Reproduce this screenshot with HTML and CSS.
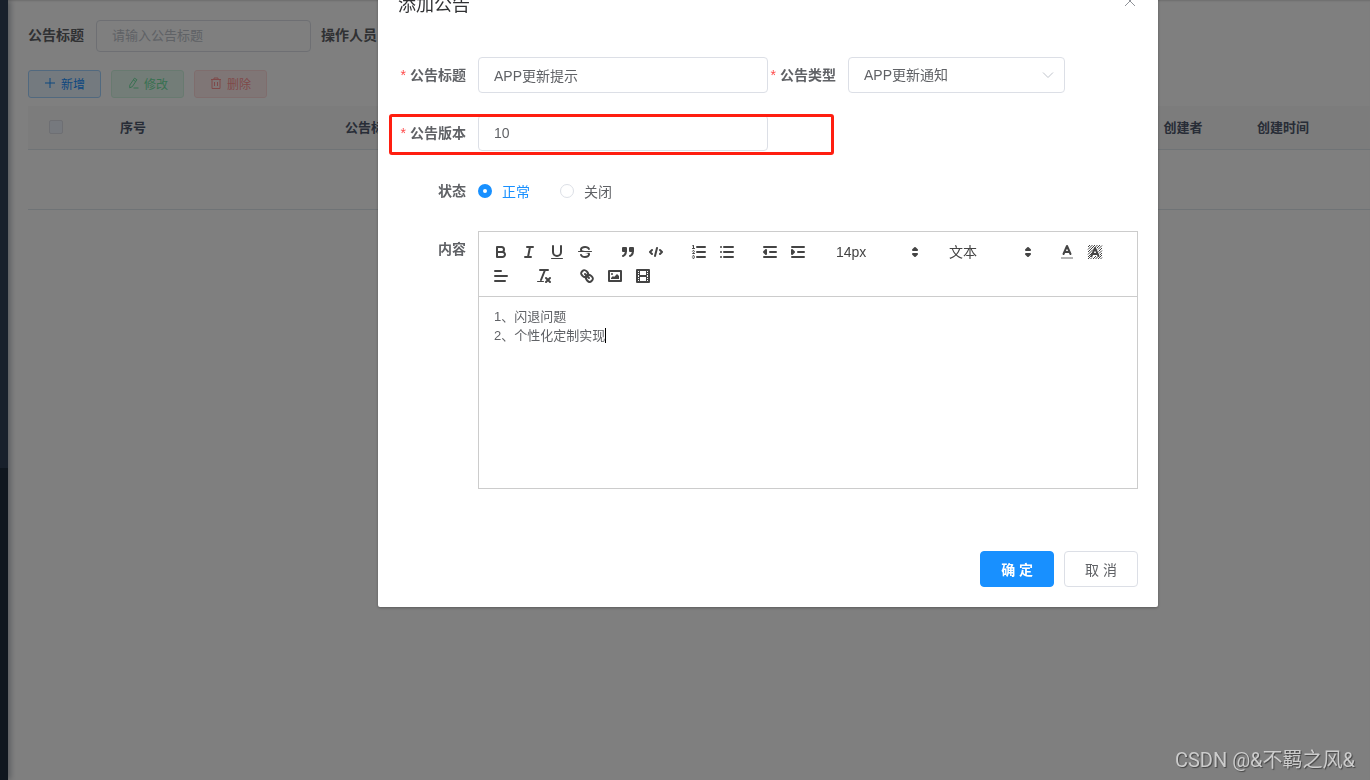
FILE: index.html
```html
<!DOCTYPE html>
<html lang="zh-CN">
<head>
<meta charset="utf-8">
<title>公告管理</title>
<link rel="stylesheet" href="styles.css">
</head>
<body>
<div class="app">
  <aside class="sidebar"><div class="sidebar-menu"></div></aside>
  <main class="main">
    <form class="search">
      <label class="search-label" for="q-title">公告标题</label>
      <input class="search-input" id="q-title" type="text" placeholder="请输入公告标题">
      <label class="search-label" for="q-user">操作人员</label>
      <input class="search-input" id="q-user" type="text">
    </form>
    <div class="actions">
      <button class="mini mini-primary" type="button"><svg viewBox="0 0 12 12"><path d="M6 1v10M1 6h10"/></svg>新增</button>
      <button class="mini mini-success" type="button" disabled><svg viewBox="0 0 12 12"><path d="M7.5 1.2l2.4 1.5-4.6 7-2.6 1.1.1-2.7zM6.3 3l2.4 1.5M6.500 11h5"/></svg>修改</button>
      <button class="mini mini-danger" type="button" disabled><svg viewBox="0 0 12 12"><path d="M1 2.500h10M4 2.500V1h4v1.500M2 2.500v9h8v-9M4.500 5v4M7.500 5v4"/></svg>删除</button>
    </div>
    <table class="table">
      <colgroup><col class="w-check"><col class="w-col"><col class="w-title"><col><col class="w-col"><col class="w-col"><col class="w-rest"></colgroup>
      <thead>
        <tr><th><input class="check" type="checkbox" aria-label="全选" disabled></th><th>序号</th><th>公告标题</th><th></th><th>创建者</th><th>创建时间</th><th></th></tr>
      </thead>
      <tbody><tr><td colspan="7"></td></tr></tbody>
    </table>
  </main>
</div>

<div class="overlay">
  <section class="dialog" role="dialog" aria-labelledby="dlg-title">
    <header class="dialog-header">
      <h1 class="dialog-title" id="dlg-title">添加公告</h1>
      <button class="close" type="button" aria-label="关闭"><svg viewBox="0 0 16 16"><path d="M3 3l10 10M13 3L3 13"/></svg></button>
    </header>
    <form class="dialog-body">
      <div class="row">
        <div class="field half">
          <label class="label required" for="f-title">公告标题</label>
          <input class="input" id="f-title" type="text" value="APP更新提示">
        </div>
        <div class="field half">
          <label class="label required" for="f-type">公告类型</label>
          <div class="select-wrap">
            <select class="input" id="f-type"><option>APP更新通知</option></select>
            <svg class="chevron" viewBox="0 0 14 14"><path d="M2 4.500l5 5 5-5"/></svg>
          </div>
        </div>
      </div>
      <div class="row marked">
        <div class="field half">
          <label class="label required" for="f-ver">公告版本</label>
          <input class="input" id="f-ver" type="text" value="10">
        </div>
      </div>
      <div class="field" role="radiogroup" aria-labelledby="f-state">
        <span class="label" id="f-state">状态</span>
        <label class="radio"><input type="radio" name="state" checked><span>正常</span></label>
        <label class="radio"><input type="radio" name="state"><span>关闭</span></label>
      </div>
      <div class="field top">
        <span class="label" id="f-content">内容</span>
        <div class="editor">
          <div class="toolbar">
            <span class="group">
              <button type="button" aria-label="加粗"><svg viewBox="0 0 18 18"><path class="s" d="M5,4H9.5A2.5,2.5,0,0,1,12,6.5v0A2.5,2.5,0,0,1,9.5,9H5V4Z"/><path class="s" d="M5,9h5.5A2.5,2.5,0,0,1,13,11.5v0A2.5,2.5,0,0,1,10.5,14H5V9Z"/></svg></button>
              <button type="button" aria-label="斜体"><svg viewBox="0 0 18 18"><path class="s" d="M7 4H13M5 14H11M8 14L10 4"/></svg></button>
              <button type="button" aria-label="下划线"><svg viewBox="0 0 18 18"><path class="s" d="M5,3V9a4.012,4.012,0,0,0,4,4H9a4.012,4.012,0,0,0,4-4V3"/><rect class="f" height="1" rx="0.5" width="12" x="3" y="15"/></svg></button>
              <button type="button" aria-label="删除线"><svg viewBox="0 0 18 18"><path class="s thin" d="M15.500 8.500H2.500"/><path class="f" d="M9.007,8C6.542,7.791,6,7.519,6,6.5,6,5.792,7.283,5,9,5c1.571,0,2.765.679,2.969,1.309a1,1,0,0,0,1.900-.617C13.356,4.106,11.354,3,9,3,6.200,3,4,4.538,4,6.500a3.200,3.200,0,0,0,.5,1.843Z"/><path class="f" d="M8.984,10C11.457,10.208,12,10.479,12,11.500c0,.708-1.283,1.500-3,1.500-1.571,0-2.765-.679-2.969-1.309a1,1,0,1,0-1.900.617C4.644,13.894,6.646,15,9,15c2.800,0,5-1.538,5-3.500a3.200,3.200,0,0,0-.5-1.843Z"/></svg></button>
            </span>
            <span class="group">
              <button type="button" aria-label="引用"><svg viewBox="0 0 18 18"><rect class="f s" height="3" width="3" x="4" y="5"/><rect class="f s" height="3" width="3" x="11" y="5"/><path class="f s" d="M7,8c0,4.031-3,5-3,5"/><path class="f s" d="M14,8c0,4.031-3,5-3,5"/></svg></button>
              <button type="button" aria-label="代码"><svg viewBox="0 0 18 18"><path class="s" d="M5 7L3 9 5 11M13 7L15 9 13 11M10 5L8 13"/></svg></button>
            </span>
            <span class="group">
              <button type="button" aria-label="有序列表"><svg viewBox="0 0 18 18"><path class="s" d="M7 4H15M7 9H15M7 14H15"/><path class="s thin" d="M2.500 5.500H4.500"/><path class="f" d="M3.500,6A0.500,0.500,0,0,1,3,5.500V3.085l-0.276.138A0.500,0.500,0,0,1,2.053,3c-0.124-.247-0.023-0.324.224-0.447l1-.5A0.500,0.500,0,0,1,4,2.500v3A0.500,0.500,0,0,1,3.500,6Z"/><path class="s thin" d="M4.500,10.500h-2c0-.234,1.850-1.076,1.850-2.234A0.959,0.959,0,0,0,2.500,8.156"/><path class="s thin" d="M2.500,14.846a0.959,0.959,0,0,0,1.850-.109A0.700,0.700,0,0,0,3.750,14a0.688,0.688,0,0,0,.6-0.736,0.959,0.959,0,0,0-1.850-.109"/></svg></button>
              <button type="button" aria-label="无序列表"><svg viewBox="0 0 18 18"><path class="s" d="M6 4H15M6 9H15M6 14H15M3 4H3M3 9H3M3 14H3"/></svg></button>
            </span>
            <span class="group">
              <button type="button" aria-label="减少缩进"><svg viewBox="0 0 18 18"><path class="s" d="M3 14H15M3 4H15M9 9H15"/><path class="f s" d="M5 7V11L3 9Z"/></svg></button>
              <button type="button" aria-label="增加缩进"><svg viewBox="0 0 18 18"><path class="s" d="M3 14H15M3 4H15M9 9H15"/><path class="f s" d="M3 7V11L5 9Z"/></svg></button>
            </span>
            <span class="group picker">
              <select aria-label="字号"><option>14px</option></select>
              <svg viewBox="0 0 18 18"><path class="f s" d="M7 11L9 13 11 11ZM7 7L9 5 11 7Z"/></svg>
            </span>
            <span class="group picker">
              <select aria-label="标题"><option>文本</option></select>
              <svg viewBox="0 0 18 18"><path class="f s" d="M7 11L9 13 11 11ZM7 7L9 5 11 7Z"/></svg>
            </span>
            <span class="group">
              <button type="button" aria-label="文字颜色"><svg viewBox="0 0 18 18"><path class="s faint" d="M3 15H15"/><path class="s" d="M5.500 11L9 3 12.500 11M11.630 9H6.380"/></svg></button>
              <button type="button" aria-label="背景颜色"><svg viewBox="0 0 18 18"><path class="hatch" d="M2 4L4 2M2 6.500L6.500 2M2 9L9 2M2 11.500L7 6.500M2 14L6 10M2 16L5 13M9 4.500L11.500 2M11 5L14 2M12 6.500L16 2.500M12.500 8.500L16 5M13 10.500L16 7.500M14 12L16 10M4.500 16L6 14.500M7 16L10 13M9.500 16L12 13.500M12 16L16 12M14.500 16L16 14.500"/><path class="s" d="M5.500 13L9 5 12.500 13M11.630 11H6.380"/></svg></button>
            </span>
            <span class="group">
              <button type="button" aria-label="对齐"><svg viewBox="0 0 18 18"><path class="s" d="M3 9H15M3 14H13M3 4H9"/></svg></button>
            </span>
            <span class="group">
              <button type="button" aria-label="清除格式"><svg viewBox="0 0 18 18"><path class="s" d="M5 3H13M6 13L10 3M11 11L15 15M15 11L11 15"/><rect class="f" height="1" rx="0.5" width="7" x="2" y="14"/></svg></button>
            </span>
            <span class="group">
              <button type="button" aria-label="链接"><svg viewBox="0 0 18 18"><path class="s" d="M7 7L11 11"/><path class="s" d="M8.900,4.577a3.476,3.476,0,0,1,.36,4.679A3.476,3.476,0,0,1,4.577,8.900C3.185,7.500,2.035,6.400,4.217,4.217S7.500,3.185,8.900,4.577Z"/><path class="s" d="M13.423,9.100a3.476,3.476,0,0,0-4.679-.36,3.476,3.476,0,0,0,.36,4.679c1.392,1.392,2.500,2.542,4.679.36S14.815,10.500,13.423,9.100Z"/></svg></button>
              <button type="button" aria-label="图片"><svg viewBox="0 0 18 18"><rect class="s" height="10" width="12" x="3" y="4"/><circle class="f" cx="6" cy="7" r="1"/><path class="f" d="M5 12V11L7 9 8 10 11 7 13 9V12Z"/></svg></button>
              <button type="button" aria-label="视频"><svg viewBox="0 0 18 18"><rect class="s" height="12" width="12" x="3" y="3"/><path class="f" d="M5 3h1v12H5zM12 3h1v12h-1zM5 8h8v2H5zM3 5h3v1H3zM3 7h3v1H3zM3 10h3v1H3zM3 12h3v1H3zM12 5h3v1h-3zM12 7h3v1h-3zM12 10h3v1h-3zM12 12h3v1h-3z"/></svg></button>
            </span>
          </div>
          <div class="content" contenteditable="true" role="textbox" aria-multiline="true" aria-labelledby="f-content"><p>1、闪退问题</p><p>2、个性化定制实现<span class="caret"></span></p></div>
        </div>
      </div>
    </form>
    <footer class="dialog-footer">
      <button class="btn btn-primary" type="button">确 定</button>
      <button class="btn" type="button">取 消</button>
    </footer>
  </section>
</div>
<div class="watermark">CSDN @&amp;不羁之风&amp;</div>
</body>
</html>
```
FILE: styles.css
```css
*, ::before, ::after { box-sizing: border-box; }

body {
  margin: 0;
  overflow: hidden;
  color: #606266;
  font: 14px "Liberation Sans", "Noto Sans CJK SC", sans-serif;
}

button, input, select { margin: 0; font: inherit; color: inherit; }
button { cursor: pointer; }
svg { fill: none; stroke: currentColor; flex: none; }

/* Page behind the dialog */
.app { display: flex; min-height: 100vh; }
.sidebar {
  width: 8px;
  flex: none;
  background: #1f2d3d;
  box-shadow: 2px 0 6px rgba(0, 21, 41, .35);
}
.sidebar-menu { height: 60vh; background: #304156; }
.main {
  flex: 1;
  min-width: 0;
  padding: 20px 0 0 20px;
  box-shadow: inset 0 2px 2px -1px rgba(0, 0, 0, .15);
}
.search { display: flex; align-items: center; height: 32px; }
.search-label { flex: none; padding-right: 12px; font-weight: bold; line-height: 30px; height: 32px; }
.search-input {
  flex: none;
  width: 215px;
  height: 32px;
  margin-right: 10px;
  padding: 0 15px 2px;
  border: 1px solid #dcdfe6;
  border-radius: 4px;
  font-size: 13px;
}
.search-input::placeholder { color: #c0c4cc; }
.actions { display: flex; gap: 10px; margin: 18px 0 8px; }
.mini {
  display: flex;
  align-items: center;
  gap: 5px;
  height: 28px;
  padding: 0 15px 2px;
  border: 1px solid;
  border-radius: 3px;
  font-size: 12px;
}
.mini svg { width: 12px; height: 12px; }
.mini-primary { color: #1890ff; background: #e8f4ff; border-color: #a3d3ff; }
.mini-success { color: #71e2a3; background: #e7faf0; border-color: #d0f5e0; }
.mini-danger { color: #ff9292; background: #ffeded; border-color: #ffdbdb; }

.table { width: 100%; table-layout: fixed; border-collapse: separate; border-spacing: 0; }
.w-check { width: 55px; }
.w-col { width: 100px; }
.w-title { width: 376px; }
.w-rest { width: 37px; }
.table th {
  height: 44px;
  padding: 0 0 2px;
  background: #f8f8f9;
  border-bottom: 1px solid #dfe6ec;
  color: #515a6e;
  font-size: 13px;
}
.table td { height: 60px; padding: 0; border-bottom: 1px solid #dfe6ec; }
.check {
  appearance: none;
  display: block;
  width: 14px;
  height: 14px;
  margin: 0 auto;
  background: #edf2fc;
  border: 1px solid #dcdfe6;
  border-radius: 2px;
}

/* Dialog */
.overlay {
  position: fixed;
  inset: 0;
  display: flex;
  justify-content: center;
  align-items: flex-start;
  padding-left: 166px;
  overflow: hidden;
  background: rgba(0, 0, 0, .5);
}
.dialog {
  width: 780px;
  margin-top: -27px;
  background: #fff;
  border-radius: 2px;
  box-shadow: 0 1px 3px rgba(0, 0, 0, .3);
}
.dialog-header { display: flex; justify-content: space-between; padding: 20px 20px 10px; }
.dialog-title { margin: 0; color: #303133; font-size: 18px; font-weight: normal; line-height: 24px; }
.close { width: 16px; height: 16px; padding: 0; border: 0; background: none; color: #909399; }
.close svg { display: block; width: 16px; height: 16px; }
.dialog-body { display: flex; flex-direction: column; gap: 22px; padding: 30px 20px 52px; }
.row { display: flex; }
.field { display: flex; align-items: center; min-height: 36px; }
.half { width: 50%; }
.top { align-items: flex-start; }
.label {
  flex: none;
  width: 80px;
  padding-right: 12px;
  text-align: right;
  font-weight: bold;
  line-height: 36px;
}
.required::before { content: "*"; margin-right: 4px; color: #ff4949; font-weight: normal; }
.input {
  width: 100%;
  height: 36px;
  padding: 0 15px;
  border: 1px solid #dcdfe6;
  border-radius: 4px;
  background: #fff;
  appearance: none;
}
.select-wrap { position: relative; width: 217px; }
.chevron { position: absolute; right: 10px; top: 11px; width: 14px; height: 14px; color: #c0c4cc; pointer-events: none; }
.marked { position: relative; }
.marked::after {
  content: "";
  position: absolute;
  inset: -1px auto -4px -9px;
  width: 445px;
  border: 3px solid #ff1e10;
  border-radius: 3px;
  pointer-events: none;
}
.radio { display: flex; align-items: center; gap: 10px; margin-right: 30px; }
.radio input {
  appearance: none;
  width: 14px;
  height: 14px;
  border: 1px solid #dcdfe6;
  border-radius: 50%;
  background: #fff;
}
.radio input:checked { border: 5px solid #1890ff; }
.radio input:checked + span { color: #1890ff; }

/* Rich text editor */
.editor { flex: 1; min-width: 0; border: 1px solid #ccc; }
.toolbar { display: flex; flex-wrap: wrap; column-gap: 15px; padding: 8px; border-bottom: 1px solid #ccc; color: #444; }
.group { display: flex; height: 24px; }
.toolbar button { width: 28px; height: 24px; padding: 3px 5px; border: 0; background: none; }
.toolbar svg { display: block; width: 18px; height: 18px; stroke: none; }
.toolbar .s { stroke: currentColor; stroke-width: 2; stroke-linecap: round; stroke-linejoin: round; }
.toolbar .thin { stroke-width: 1; }
.toolbar .faint { opacity: .4; stroke-linecap: butt; }
.toolbar .f { fill: currentColor; }
.toolbar .hatch { stroke: currentColor; stroke-width: 1; }
.picker { position: relative; width: 98px; }
.picker select { width: 100%; height: 24px; padding: 0 9px; border: 0; background: none; appearance: none; }
.picker svg { position: absolute; right: 1px; top: 3px; pointer-events: none; }
.content { min-height: 191px; padding: 10px 15px; font-size: 13px; line-height: 19px; outline: 0; }
.content p { margin: 0; }
.caret { border-left: 1px solid #000; }

.dialog-footer { display: flex; justify-content: flex-end; gap: 10px; padding: 10px 20px 20px; }
.btn {
  height: 36px;
  padding: 0 20px;
  border: 1px solid #dcdfe6;
  border-radius: 4px;
  background: #fff;
}
.btn-primary { background: #1890ff; border-color: #1890ff; color: #fff; font-weight: bold; }

.watermark {
  position: fixed;
  right: 15px;
  bottom: 6px;
  color: #ccc;
  font-family: Roboto, "Noto Sans CJK SC", sans-serif;
  font-size: 20px;
  line-height: 28px;
  text-shadow: 1px 1px 1px #444;
}
```
